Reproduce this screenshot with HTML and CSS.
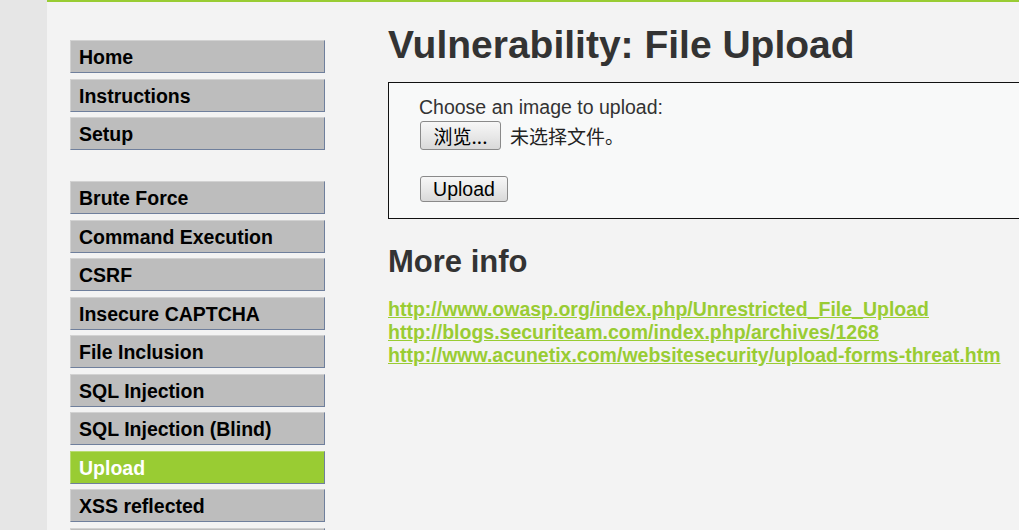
FILE: index.html
```html
<!DOCTYPE html>
<html>
<head>
<meta charset="utf-8">
<link rel="stylesheet" href="styles.css">
</head>
<body>
<div class="page">
  <div class="strip"></div>
  <div class="main">
    <nav class="menu">
      <ul class="group">
        <li class="item">Home</li>
        <li class="item">Instructions</li>
        <li class="item">Setup</li>
      </ul>
      <ul class="group">
        <li class="item">Brute Force</li>
        <li class="item">Command Execution</li>
        <li class="item">CSRF</li>
        <li class="item">Insecure CAPTCHA</li>
        <li class="item">File Inclusion</li>
        <li class="item">SQL Injection</li>
        <li class="item">SQL Injection (Blind)</li>
        <li class="item active">Upload</li>
        <li class="item">XSS reflected</li>
        <li class="item"></li>
      </ul>
    </nav>
    <div class="content">
      <h1 class="title">Vulnerability: File Upload</h1>
      <div class="box">
        <div class="label">Choose an image to upload:</div>
        <div class="filerow">
          <button class="btn browse">浏览...</button>
          <span class="nofile">未选择文件。</span>
        </div>
        <button class="btn upload">Upload</button>
      </div>
      <h2 class="more">More info</h2>
      <ul class="links">
        <li><a href="#">http://www.owasp.org/index.php/Unrestricted_File_Upload</a></li>
        <li><a href="#">http://blogs.securiteam.com/index.php/archives/1268</a></li>
        <li><a href="#">http://www.acunetix.com/websitesecurity/upload-forms-threat.htm</a></li>
      </ul>
    </div>
  </div>
</div>
</body>
</html>
```
FILE: styles.css
```css
html, body {
  margin: 0;
  padding: 0;
  height: 100%;
  overflow: hidden;
}
body {
  font-family: "Liberation Sans", Arial, sans-serif;
  color: #333;
  background: #f3f3f3;
}
.page {
  display: flex;
  min-height: 530px;
  width: 1200px;
}
.strip {
  width: 47px;
  flex: none;
  background: #e6e6e6;
}
.main {
  flex: 1;
  display: flex;
  border-top: 2px solid #99cc33;
  background: #f3f3f3;
}
.menu {
  width: 255px;
  flex: none;
  margin-left: 23px;
  padding-top: 38px;
}
.group {
  list-style: none;
  margin: 0 0 31px 0;
  padding: 0;
}
.item {
  box-sizing: border-box;
  height: 33px;
  margin-bottom: 5.5px;
  padding-left: 8px;
  background: #bdbdbd;
  border-top: 1px solid #d2d2d2;
  border-left: 1px solid #d2d2d2;
  border-right: 1px solid #6f7f9c;
  border-bottom: 1px solid #6f7f9c;
  font-weight: bold;
  font-size: 19.5px;
  line-height: 32px;
  color: #000;
}
.item.active {
  background: #99cc33;
  color: #fff;
  border-top-color: #b8dc70;
  border-left-color: #b8dc70;
}
.content {
  margin-left: 63px;
  width: 760px;
  flex: none;
}
.title {
  margin: 20px 0 15px;
  font-size: 39px;
  line-height: 45px;
  font-weight: bold;
  color: #333;
}
.box {
  border: 1px solid #111;
  background: #f8f9f9;
  padding: 13px 0 16px 30px;
  font-size: 19.5px;
}
.label {
  line-height: 23px;
}
.filerow {
  display: flex;
  align-items: center;
  gap: 9px;
  margin-top: 2px;
  margin-left: 1px;
}
.nofile {
  font-family: "Noto Sans CJK SC", sans-serif;
  font-size: 19px;
  color: #222;
}
.btn {
  font-family: "Liberation Sans", "Noto Sans CJK SC", Arial, sans-serif;
  font-size: 19.5px;
  color: #000;
  border: 1px solid #8a8a8a;
  border-radius: 3px;
  background: linear-gradient(#f7f7f7, #e9e9e9 50%, #d9d9d9);
  padding: 0 12px;
  margin: 0;
}
.browse {
  height: 29px;
  width: 81px;
  padding: 0;
  font-family: "Noto Sans CJK SC", sans-serif;
  font-size: 19px;
  line-height: 27px;
}
.upload {
  display: block;
  height: 26px;
  width: 88px;
  padding: 0;
  line-height: 24px;
  margin-top: 26px;
  margin-left: 1px;
}
.more {
  margin: 25px 0 18px;
  font-size: 31px;
  line-height: 36px;
  font-weight: bold;
  color: #333;
}
.links {
  list-style: none;
  margin: 0;
  padding: 0;
}
.links li {
  line-height: 23px;
  font-size: 19.5px;
}
.links a {
  color: #99cc33;
  font-weight: bold;
  text-decoration: underline;
}
```
